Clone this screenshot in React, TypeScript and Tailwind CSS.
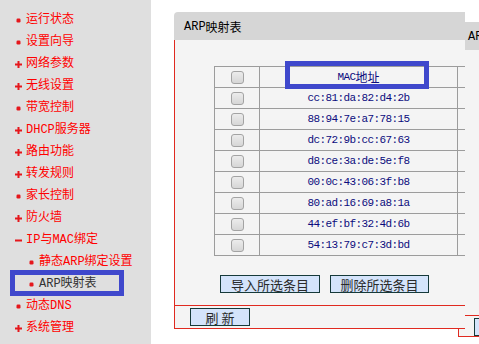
import React from "react";

type NavItem = {
  label: string;
  icon: "dot" | "plus" | "minus";
  sub?: boolean;
  active?: boolean;
};

const NAV: NavItem[] = [
  { label: "运行状态", icon: "dot" },
  { label: "设置向导", icon: "dot" },
  { label: "网络参数", icon: "plus" },
  { label: "无线设置", icon: "plus" },
  { label: "带宽控制", icon: "dot" },
  { label: "DHCP服务器", icon: "plus" },
  { label: "路由功能", icon: "plus" },
  { label: "转发规则", icon: "plus" },
  { label: "家长控制", icon: "dot" },
  { label: "防火墙", icon: "plus" },
  { label: "IP与MAC绑定", icon: "minus" },
  { label: "静态ARP绑定设置", icon: "dot", sub: true },
  { label: "ARP映射表", icon: "dot", sub: true, active: true },
  { label: "动态DNS", icon: "dot" },
  { label: "系统管理", icon: "plus" },
];

const MACS = [
  "cc:81:da:82:d4:2b",
  "88:94:7e:a7:78:15",
  "dc:72:9b:cc:67:63",
  "d8:ce:3a:de:5e:f8",
  "00:0c:43:06:3f:b8",
  "80:ad:16:69:a8:1a",
  "44:ef:bf:32:4d:6b",
  "54:13:79:c7:3d:bd",
];

const FONT = { fontFamily: '"Liberation Mono", "Noto Sans CJK SC", monospace' };
const CJK = { fontFamily: '"Noto Sans CJK SC", "Liberation Sans", sans-serif' };

function NavIcon({ kind }: { kind: NavItem["icon"] }) {
  return (
    <svg width="7" height="7" viewBox="0 0 7 7" className="shrink-0">
      {kind === "dot" && <rect x="1.5" y="1.5" width="4" height="4" rx="1.2" fill="#e5171c" />}
      {kind === "plus" && (
        <>
          <rect x="0" y="2.5" width="7" height="2" fill="#e5171c" />
          <rect x="2.5" y="0" width="2" height="7" fill="#e5171c" />
        </>
      )}
      {kind === "minus" && <rect x="0" y="2.5" width="7" height="2" fill="#e5171c" />}
    </svg>
  );
}

function Checkbox() {
  return (
    <div className="h-[13px] w-[13px] rounded-[3px] border border-[#a3a3a3] bg-gradient-to-b from-[#ececec] to-[#d6d6d6]" />
  );
}

function Button({ children, className }: { children: React.ReactNode; className?: string }) {
  return (
    <div
      className={`flex h-[18px] items-center justify-center border border-[#163a3a] bg-[#d4e4fb] text-[13px] leading-none text-[#2a2a2a] ${className ?? ""}`}
      style={CJK}
    >
      {children}
    </div>
  );
}

function PanelHeader() {
  return (
    <div className="flex h-[28px] items-center rounded-tl-[4px] bg-[#d6d6d6] pl-[10px] pt-[2px] text-[12px] text-black" style={FONT}>
      ARP<span style={CJK}>映射表</span>
    </div>
  );
}

export default function App() {
  return (
    <div className="flex h-[344px] w-[479px] overflow-hidden bg-white" style={FONT}>
      <aside className="w-[151px] shrink-0 bg-[#dfdfdf] pt-[9px]">
        {NAV.map((item) => (
          <div
            key={item.label}
            className={`relative flex h-[22px] items-center gap-[4px] ${item.sub ? "pl-[28px]" : "pl-[15px]"}`}
          >
            <NavIcon kind={item.icon} />
            <span className={`text-[12px] leading-none ${item.active ? "text-[#333333]" : "text-[#ff0000]"}`}>
              {item.label}
            </span>
            {item.active && (
              <div className="absolute left-[10px] top-[-3px] h-[26px] w-[114px] border-[5px] border-[#3f48cc]" />
            )}
          </div>
        ))}
      </aside>

      <main className="relative flex-1 pl-[23px] pt-[12px]">
        {/* second frame peeking out behind */}
        <div className="absolute left-[307px] top-[22px] z-0 w-[291px]">
          <PanelHeader />
          <div className="border-b border-l border-[#e02a20] bg-[#f4f4f4]">
            <div className="h-[266px] border-b border-[#e02a20]" />
            <div className="flex h-[20px] items-start pl-[15px] pt-[2px]">
              <Button className="w-[60px]">刷 新</Button>
            </div>
          </div>
        </div>

        <div className="relative z-10 w-[291px] overflow-hidden">
          <PanelHeader />
          <div className="border-b border-l border-[#e02a20] bg-[#f4f4f4]">
            <div className="h-[266px] border-b border-[#e02a20] pl-[39px] pt-[26px]">
              <div className="relative w-[320px]">
                <div className="border-t border-[#9c9c9c]">
                  <div className="flex h-[21px] border-b border-[#9c9c9c]">
                    <div className="flex w-[45px] items-center justify-center border-l border-[#9c9c9c]">
                      <Checkbox />
                    </div>
                    <div className="flex w-[198px] items-center justify-center border-l border-[#9c9c9c] text-[#0b0b7d]">
                      <span className="text-[11px] tracking-[-0.6px]">MAC</span>
                      <span className="text-[12px]" style={CJK}>
                        地址
                      </span>
                    </div>
                    <div className="w-[77px] border-l border-r border-[#9c9c9c]" />
                  </div>
                  {MACS.map((mac) => (
                    <div key={mac} className="flex h-[21px] border-b border-[#9c9c9c]">
                      <div className="flex w-[45px] items-center justify-center border-l border-[#9c9c9c]">
                        <Checkbox />
                      </div>
                      <div className="flex w-[198px] items-center justify-center border-l border-[#9c9c9c] text-[11px] tracking-[-0.6px] text-[#0b0b7d]">
                        {mac}
                      </div>
                      <div className="w-[77px] border-l border-r border-[#9c9c9c]" />
                    </div>
                  ))}
                </div>
                <div className="absolute left-[71px] top-[-5px] h-[28px] w-[144px] border-[5px] border-[#3f48cc]" />
              </div>
              <div className="mt-[19px] flex gap-[10px] pl-[6px]">
                <Button className="w-[100px]">导入所选条目</Button>
                <Button className="w-[99px]">删除所选条目</Button>
              </div>
            </div>
            <div className="flex h-[22px] items-start pl-[15px] pt-[2px]">
              <Button className="w-[60px]">刷 新</Button>
            </div>
          </div>
        </div>
      </main>
    </div>
  );
}
